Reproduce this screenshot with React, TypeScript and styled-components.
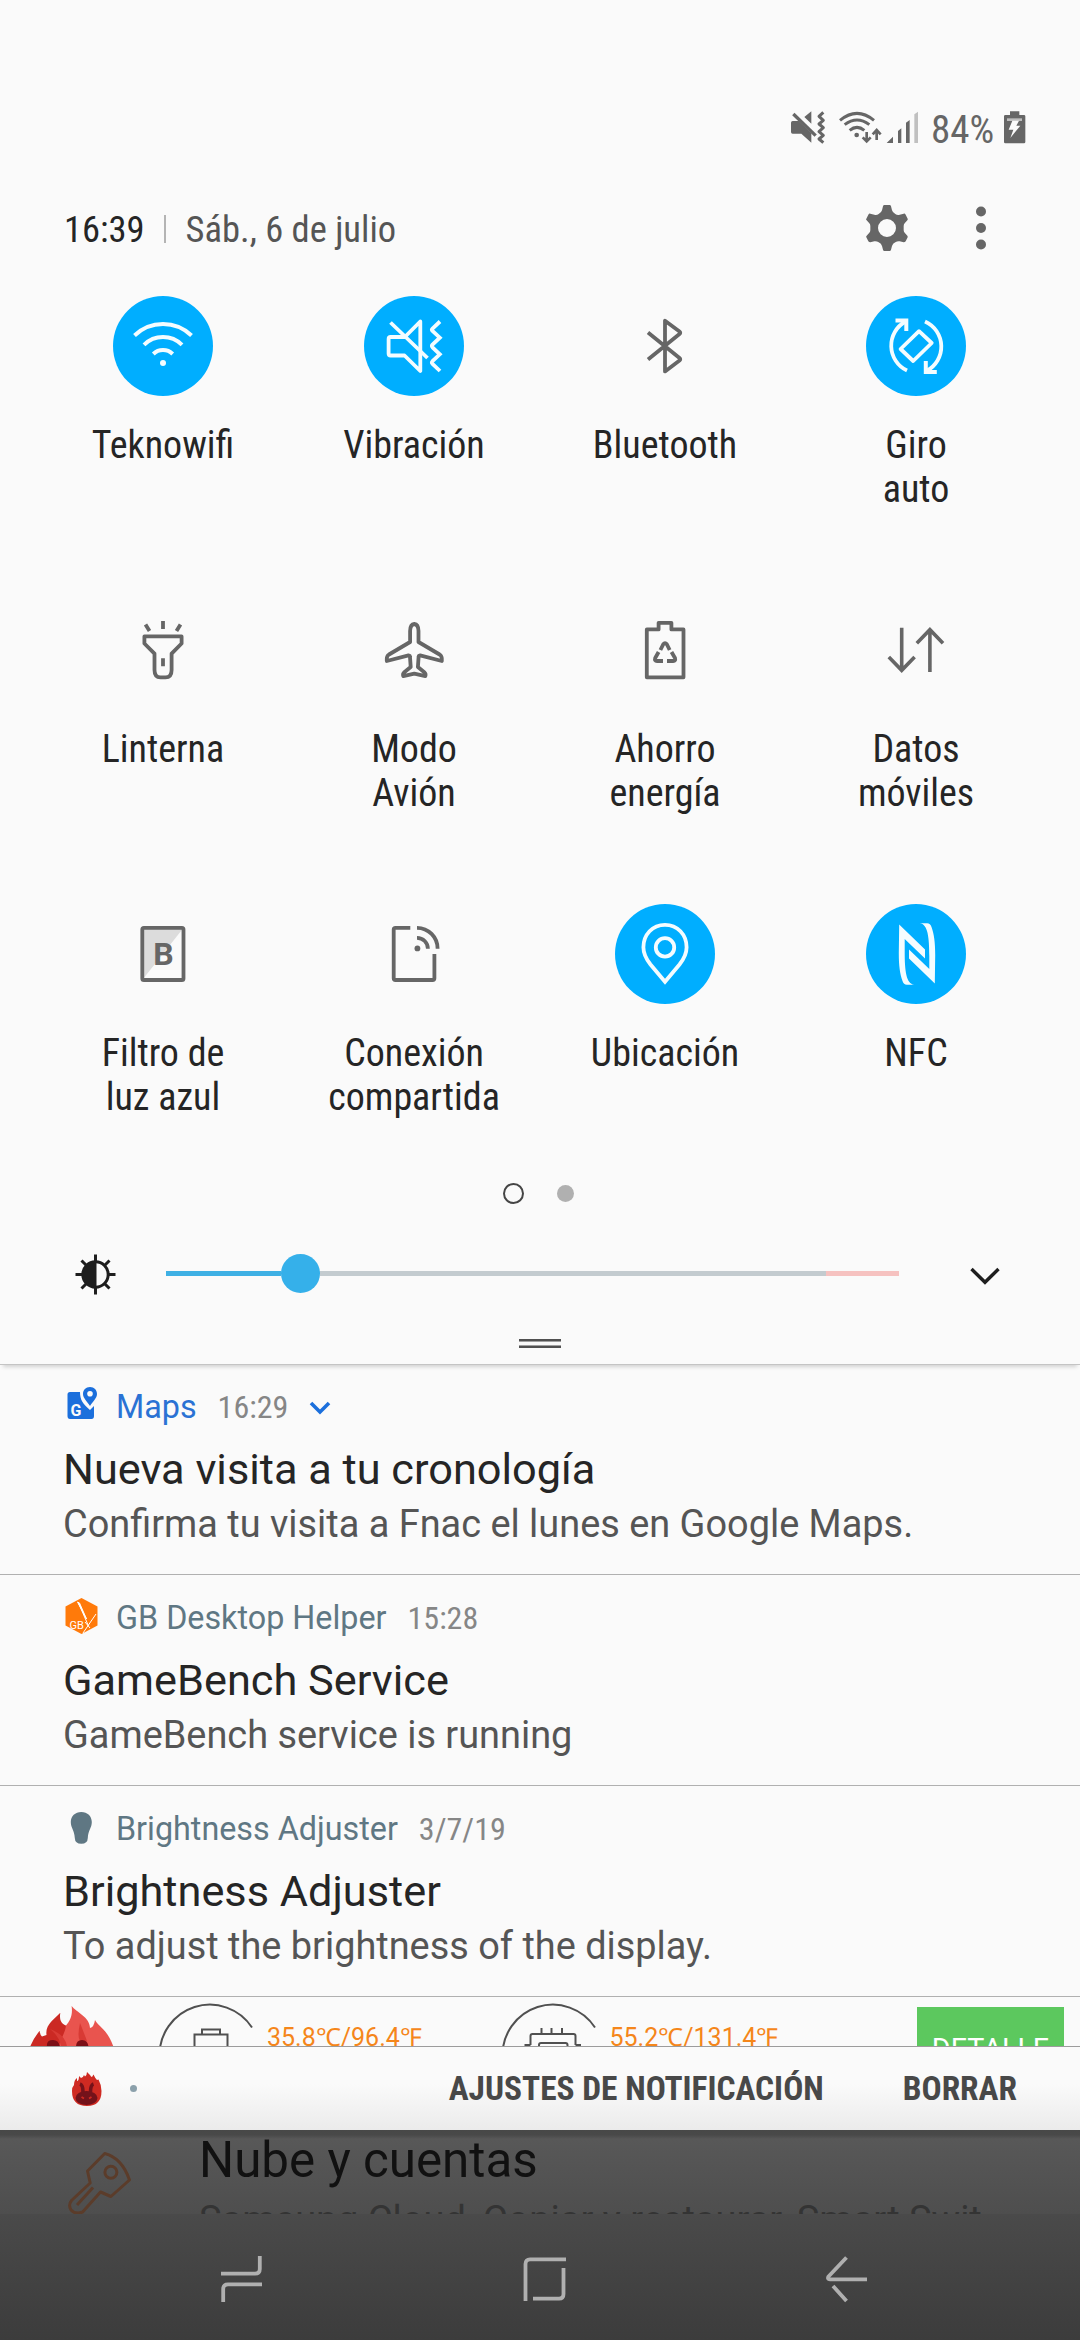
import React from "react";
import styled, { createGlobalStyle, css } from "styled-components";

const GlobalStyle = createGlobalStyle`
  html, body { margin: 0; padding: 0; background: #fafafa; }
  *, *::before, *::after { box-sizing: border-box; }
  svg { display: block; flex: none; overflow: visible; }
`;

const condensed = css`
  font-family: "Roboto Condensed", "Roboto", "Liberation Sans", sans-serif;
  font-stretch: 75%;
`;

const Screen = styled.main`
  width: 1080px;
  height: 2340px;
  display: flex;
  flex-direction: column;
  overflow: hidden;
  background: #fafafa;
  color: #252525;
  font-family: "Roboto", "Liberation Sans", sans-serif;
  white-space: nowrap;
`;

/* Quick panel */

const StatusBar = styled.header`
  height: 144px;
  padding: 110px 54px 0 0;
  display: flex;
  justify-content: flex-end;
`;

const StatusIcon = styled.svg<{ $gap: number }>`
  height: 34px;
  margin-right: ${(p) => p.$gap}px;
  color: #666;
`;

const BatteryLevel = styled.span`
  ${condensed}
  font-size: 39px;
  line-height: 40px;
  width: 72px;
  color: #666;
`;

const DateBar = styled.div`
  height: 152px;
  padding: 60px 93px 44px 64px;
  display: flex;
  align-items: center;
`;

const Clock = styled.span`
  ${condensed}
  font-size: 36.5px;
  line-height: 48px;
  padding-top: 3px;
`;

const DateText = styled(Clock)`
  color: #555;
  flex: 1;
`;

const Separator = styled.i`
  width: 2px;
  height: 28px;
  margin: 2px 20px 0 19px;
  background: #b4b4b4;
`;

const Tiles = styled.section`
  display: grid;
  grid-template-columns: repeat(4, 251px);
  grid-template-rows: 304px 304px 220px;
  padding: 0 37.5px;
`;

const Tile = styled.div`
  display: flex;
  flex-direction: column;
  align-items: center;
`;

const TileDisc = styled.div<{ $on?: boolean }>`
  width: 100px;
  height: 100px;
  border-radius: 50%;
  background: ${(p) => (p.$on ? "#00aeff" : "transparent")};
  color: ${(p) => (p.$on ? "#f4fcff" : "#666")};
`;

const TileLabel = styled.span`
  ${condensed}
  margin-top: 27px;
  font-size: 38px;
  line-height: 44px;
  text-align: center;
  white-space: pre-line;
`;

const Pager = styled.div`
  margin-top: 59px;
  height: 21px;
  padding-right: 4px;
  display: flex;
  justify-content: center;
  align-items: center;
  gap: 33px;
`;

const PageDot = styled.i<{ $current?: boolean }>`
  width: ${(p) => (p.$current ? 21 : 17)}px;
  height: ${(p) => (p.$current ? 21 : 17)}px;
  border-radius: 50%;
  border: ${(p) => (p.$current ? "2px solid #454545" : "none")};
  background: ${(p) => (p.$current ? "transparent" : "#b0b0b0")};
`;

const BrightnessRow = styled.div`
  margin-top: 49px;
  height: 41px;
  padding: 0 80px 0 75px;
  display: flex;
  align-items: center;
`;

const Track = styled.div`
  width: 733px;
  height: 39px;
  margin: 0 71px 0 50px;
  display: flex;
  align-items: center;
`;

const TrackPart = styled.i<{ $width: number; $color: string }>`
  width: ${(p) => p.$width}px;
  height: 5px;
  background: ${(p) => p.$color};
`;

const Thumb = styled.i`
  width: 39px;
  height: 39px;
  border-radius: 50%;
  background: #35b0ea;
`;

const HandleArea = styled.div`
  height: 71px;
  padding-top: 45px;
  display: flex;
  flex-direction: column;
  align-items: center;
  gap: 3px;
  border-bottom: 1px solid #c4c4c4;
  box-shadow: 0 5px 4px -3px rgba(0, 0, 0, 0.16);
`;

const HandleLine = styled.i`
  width: 42px;
  height: 3px;
  background: linear-gradient(#505050 66%, #a0a0a0 66%);
  &:last-child { transform: scaleY(-1); }
`;

/* Notifications */

const Notification = styled.article<{ $first?: boolean }>`
  height: ${(p) => (p.$first ? 210 : 211)}px;
  padding: ${(p) => (p.$first ? 22 : 23)}px 63px 0;
  border-bottom: 1px solid #b0b0b0;
`;

const NotificationHead = styled.div<{ $tint: string }>`
  display: flex;
  align-items: center;
  height: 40px;
  color: ${(p) => p.$tint};
  font-size: 32.3px;
  line-height: 40px;
`;

const IconSlot = styled.span`
  width: 53px;
  display: flex;
`;

const When = styled.span`
  ${condensed}
  margin: 0 21px;
  font-size: 32px;
  color: #868686;
`;

const Title = styled.h2`
  margin: 14.5px 0 2.5px;
  font-size: 43.3px;
  font-weight: 400;
  line-height: 56px;
`;

const Body = styled.p`
  margin: 0;
  font-size: 37.9px;
  line-height: 48px;
  color: #555;
`;

const MonitorStrip = styled.article`
  height: 50px;
  padding-left: 30px;
  display: flex;
  align-items: flex-start;
  overflow: hidden;
  border-bottom: 1px solid #9c9c9c;
`;

const GaugeGroup = styled.div`
  display: flex;
  margin-left: 36px;
`;

const Gauge = styled.svg`
  margin-right: -3px;
`;

const Temperature = styled.span<{ $width: number }>`
  width: ${(p) => p.$width}px;
  padding-top: 25px;
  font-size: 25px;
  line-height: 32px;
  color: #f5861a;
`;

const DetailButton = styled.span`
  width: 147px;
  margin-top: 10px;
  padding-top: 24px;
  font-size: 28.7px;
  line-height: 36px;
  text-align: center;
  color: #fff;
  background: #5cc85e;
`;

const Footer = styled.footer`
  height: 83px;
  padding: 0 63px 0 71px;
  display: flex;
  align-items: center;
  background: linear-gradient(#fafafa 45%, #ebebeb);
`;

const OverflowDot = styled.i`
  width: 7px;
  height: 7px;
  margin: 0 auto 0 28px;
  border-radius: 50%;
  background: #8ba0ab;
`;

const FooterAction = styled.span`
  ${condensed}
  font-size: 33.4px;
  font-weight: 700;
  line-height: 40px;
  margin-left: 79px;
  color: #484848;
`;

/* Dimmed page below the shade */

const Backdrop = styled.section`
  height: 84px;
  padding-left: 60px;
  display: flex;
  overflow: hidden;
  background: linear-gradient(#474847 0, #494949 5px, #585858 9px, #4e4e4e 84px);
`;

const BackdropText = styled.div`
  margin-left: 59px;
`;

const BackdropTitle = styled.div`
  height: 68px;
  padding-top: 1px;
  font-size: 49.3px;
  line-height: 58px;
  color: #111;
`;

const BackdropSummary = styled.div`
  font-size: 38px;
  line-height: 44px;
  color: #343434;
`;

const NavBar = styled.nav`
  height: 126px;
  padding: 42px 213px 0 221px;
  display: flex;
  justify-content: space-between;
  background: linear-gradient(#4a4a4a, #3c3c3c);
  color: #b0b0b0;
`;

type LineIconProps = { children: React.ReactNode; w?: number };

const LineIcon = ({ children, w = 3.8 }: LineIconProps) => (
  <svg width="100" height="100" viewBox="0 0 100 100" fill="none" stroke="currentColor" strokeWidth={w}>
    {children}
  </svg>
);

const nfcHalf =
  "M33.2 20.5 L59 45.5 V54.5 L38.7 35 V48 C38.7 66 40 80 48.3 80.7 H41 C38.5 80.7 37.5 79.5 36.5 77 C34 70 32.8 62 32.8 49 Z";

const tiles: { label: string; on?: boolean; icon: React.ReactNode }[] = [
  {
    label: "Teknowifi",
    on: true,
    icon: (
      <LineIcon w={4}>
        <path d="M21.5 39.5 A41 41 0 0 1 78.5 39.5 M31 48.8 A27 27 0 0 1 69 48.8 M40.3 58 A14 14 0 0 1 59.7 58" />
        <circle cx="50" cy="67" r="3" fill="currentColor" stroke="none" />
      </LineIcon>
    ),
  },
  {
    label: "Vibración",
    on: true,
    icon: (
      <LineIcon>
        <path
          strokeLinejoin="round"
          d="M56.3 25.5 L40.8 41 H26.6 Q24.6 41 24.6 43 V57.5 Q24.6 59.5 26.6 59.5 H40.5 L56.3 75 Z"
        />
        <path d="M26.5 26.5 L63.5 62 M76 25.5 L68.5 32.5 Q67.3 33.7 68.5 35 L75.8 41.7 L68.5 48.6 Q67.3 50 68.5 51.3 L75.8 58.3 L68.5 65.2 Q67.3 66.5 68.5 67.8 L76 75" />
      </LineIcon>
    ),
  },
  {
    label: "Bluetooth",
    icon: (
      <LineIcon>
        <path
          strokeLinejoin="round"
          d="M33 63.5 L64.5 38 Q66 36.7 64.5 35.5 L50 24.7 V75.4 L64.5 64.6 Q66 63.3 64.5 62 L33 36.5"
        />
      </LineIcon>
    ),
  },
  {
    label: "Giro\nauto",
    on: true,
    icon: (
      <LineIcon>
        <path d="M41 74.5 A27.5 27.5 0 0 1 39.5 25.5 M59 25.5 A27.5 27.5 0 0 1 60.5 75" />
        <path strokeWidth="4" d="M29.5 24.5 H40.3 V35 M59.8 65 V76 H70.8" />
        <path strokeLinejoin="round" d="M53 35.2 L65.7 47 L47.2 65 L34.6 53 Z" />
      </LineIcon>
    ),
  },
  {
    label: "Linterna",
    icon: (
      <LineIcon>
        <path d="M50 21 V29 M32.5 24.5 L36.5 31 M67.5 24.5 L63.5 31 M50 58.3 V66.3" />
        <path
          strokeLinejoin="round"
          d="M31.4 36.4 H68.6 V43.5 L58.6 53.7 V70 Q58.6 77.4 52.5 77.4 H47.5 Q41.5 77.4 41.5 70 V53.7 L31.4 43.5 Z"
        />
      </LineIcon>
    ),
  },
  {
    label: "Modo\nAvión",
    icon: (
      <LineIcon>
        <path
          strokeLinejoin="round"
          d="M50.3 24 Q46.2 24.5 46.1 31 V42 L25 54.5 Q22.8 56 22.8 58.5 V61 L44.5 55.3 Q46 55.5 46 57 L46.7 67 L40 72.5 Q38.5 74 39.3 76.2 L50.3 73.7 L61.3 76.2 Q62.1 74 60.6 72.5 L53.9 67 L54.6 57 Q54.6 55.5 56.1 55.3 L77.8 61 V58.5 Q77.8 56 75.6 54.5 L54.5 42 V31 Q54.4 24.5 50.3 24 Z"
        />
      </LineIcon>
    ),
  },
  {
    label: "Ahorro\nenergía",
    icon: (
      <LineIcon>
        <path
          strokeLinejoin="round"
          d="M31.8 29.4 H43.6 V22.8 H56.4 V29.4 H68.5 V77.3 H31.8 Z"
        />
        <path d="M45.4 50 L48.3 44.2 Q50 42 51.8 44.2 L54.7 50 M43.6 52 L40.2 58 Q39.3 61 42 61 H48 M56.5 52 L60 58 Q60.8 61 58.2 61 H52" />
      </LineIcon>
    ),
  },
  {
    label: "Datos\nmóviles",
    icon: (
      <LineIcon w={3.6}>
        <path d="M35.7 27.7 V70.5 M22.8 57 L35.7 70.3 L48.6 57 M63.9 72 V29.5 M50.8 43.2 L63.9 29.7 L77 43.2" />
      </LineIcon>
    ),
  },
  {
    label: "Filtro de\nluz azul",
    icon: (
      <LineIcon>
        <path d="M30 75 V24.5 H70 Z" fill="#dcdcdc" stroke="none" />
        <rect x="29.3" y="23.8" width="41.2" height="52.2" rx="1.6" />
        <text
          x="50.5"
          y="61.3"
          fontSize="32"
          fontWeight="700"
          fontFamily="Roboto, sans-serif"
          textAnchor="middle"
          fill="currentColor"
          stroke="none"
        >
          B
        </text>
      </LineIcon>
    ),
  },
  {
    label: "Conexión\ncompartida",
    icon: (
      <LineIcon>
        <path d="M46.3 23.8 H31.5 Q29.7 23.8 29.7 25.6 V74.2 Q29.7 76 31.5 76 H68.6 Q70.4 76 70.4 74.2 V50" />
        <path d="M53 23.8 A20.6 20.8 0 0 1 73.6 44.7 M53 33.8 A10.9 10.9 0 0 1 63.9 44.7" />
        <circle cx="53.4" cy="44.4" r="2.9" fill="currentColor" stroke="none" />
      </LineIcon>
    ),
  },
  {
    label: "Ubicación",
    on: true,
    icon: (
      <LineIcon>
        <path d="M50 20.8 C37.6 20.8 28.4 30.5 28.4 43.3 C28.4 50 31.5 55.5 35.5 60.5 L50 77.8 L64.5 60.5 C68.5 55.5 71.6 50 71.6 43.3 C71.6 30.5 62.4 20.8 50 20.8 Z" />
        <circle cx="50" cy="43.4" r="9.2" />
      </LineIcon>
    ),
  },
  {
    label: "NFC",
    on: true,
    icon: (
      <LineIcon>
        <g fill="currentColor" stroke="none">
          <path d={nfcHalf} />
          <path d={nfcHalf} transform="rotate(180 51 50)" />
        </g>
      </LineIcon>
    ),
  },
];

const MutedIcon = () => (
  <StatusIcon $gap={12} width="36" viewBox="150 60 108 102">
    <path
      d="M153 98 Q153 93 158 93 H176 L214 130 V158 L184 131 H158 Q153 131 153 126 Z M193 81 L214 64 V101 Z"
      fill="currentColor"
    />
    <path d="M160 72 L227 137" stroke="currentColor" strokeWidth="10" />
    <path
      d="M250 67 L237 79 L250 91 L237 102 L250 113 L237 125 L250 136 L237 147 L250 158"
      fill="none"
      stroke="currentColor"
      strokeWidth="9"
      strokeLinejoin="round"
    />
  </StatusIcon>
);

const WifiIcon = () => (
  <StatusIcon $gap={4} width="44" viewBox="294 60 132 102">
    <g fill="none" stroke="currentColor" strokeWidth="9">
      <path d="M300 91 Q351 49 402 91 M314 104 Q351 76 388 104 M329 121 Q351 103 373 121" />
      <path strokeWidth="8" d="M380 126 V154 M368 142 L380 154 L392 142 M410 150 V121 M398 133 L410 120 L422 133" />
    </g>
    <circle cx="350" cy="135" r="7" fill="currentColor" />
  </StatusIcon>
);

const SignalIcon = () => (
  <StatusIcon $gap={12} width="33" viewBox="438 60 99 102">
    <path fill="currentColor" d="M440 159 L459 140 V159 Z M474 159 V123 L484 115 V159 Z M498 159 V98 L509 90 V159 Z" />
    <path fill="#c0c0c0" d="M523 159 V73 L534 65 V159 Z" />
  </StatusIcon>
);

const ChargingIcon = () => (
  <StatusIcon $gap={0} width="23" viewBox="789 60 69 102">
    <path
      fill="currentColor"
      d="M810 64 H838 V75 H852 Q856 75 856 79 V156 Q856 160 852 160 H796 Q792 160 792 156 V79 Q792 75 796 75 H810 Z"
    />
    <path fill="#bdbdbd" d="M801 85 H846 V93 H801 Z" />
    <path fill="#fafafa" d="M817 92 H837 L829 107 H841 L811 144 L820 119 H806 Z" />
  </StatusIcon>
);

const GearIcon = () => (
  <svg width="44" height="48" viewBox="375 342 132 144" fill="#666">
    <path
      fillRule="evenodd"
      d="M433 345 H449 Q452 345 453 349 L456 361 Q458 368 466 372 Q472 376 479 374 L491 371 Q495 370 497 374 L503 386 Q504 389 502 391 L494 400 Q491 403 491 408 V420 Q491 425 494 428 L502 437 Q504 440 503 442 L497 454 Q495 457 491 457 L479 454 Q472 453 466 457 Q458 461 456 468 L453 479 Q452 483 449 483 H433 Q430 483 429 479 L426 468 Q424 461 416 457 Q410 453 403 454 L391 457 Q387 457 385 454 L379 442 Q377 440 380 437 L388 428 Q391 425 391 420 V408 Q391 403 388 400 L380 391 Q377 389 379 386 L385 374 Q387 370 391 371 L403 374 Q410 376 416 372 Q424 368 426 361 L429 349 Q430 345 433 345 Z M441 387 A27 27 0 1 0 441 441 A27 27 0 1 0 441 387 Z"
    />
  </svg>
);

const MoreIcon = styled.svg`
  margin-left: 66px;
`;

const BrightnessIcon = () => (
  <svg width="41" height="41" viewBox="0 0 41 41" fill="none" stroke="#1e1e1e" strokeWidth="3">
    <circle cx="20.5" cy="21.5" r="12.7" />
    <path d="M21.5 8 A13.5 13.5 0 0 0 21.5 35 Z" fill="#1e1e1e" stroke="none" />
    <path d="M20.5 1.5 V9 M20.5 34 V41.5 M0.5 21.5 H8 M33 21.5 H40.5 M6.5 7.5 L11.5 12.5 M34.5 7.5 L29.5 12.5 M6.5 35.5 L11.5 30.5 M34.5 35.5 L29.5 30.5" />
  </svg>
);

const MapsIcon = () => (
  <svg width="36" height="36" viewBox="0 5 36 36">
    <path
      fill="#1b6fdc"
      d="M7 8 H17 C17 16 20 20 27 26 L31 22 V32 Q31 35 28.5 35 H7 Q4.5 35 4.5 32 V10.5 Q4.5 8 7 8 Z"
    />
    <path fill="#1b6fdc" d="M27 3 C31.2 3 34 6 34 10 C34 14 30 17.5 27 22 C24 17.5 20 14 20 10 C20 6 22.8 3 27 3 Z" />
    <circle cx="27" cy="9.8" r="2.8" fill="#fafafa" />
    <text x="7.5" y="31.5" fontSize="16" fontWeight="700" fontFamily="Roboto, sans-serif" fill="#fafafa">
      G
    </text>
  </svg>
);

const GameBenchIcon = () => (
  <svg width="36" height="36" viewBox="0 2 36 36">
    <path fill="#ff7a0a" d="M18.5 0 L34.5 8.5 V27.5 L18.5 36 L2.5 27.5 V8.5 Z" />
    <path d="M15.5 5 L25.5 28 M33 16 L20 35 M22 24 L27 30" stroke="#fff" strokeWidth="1" fill="none" />
    <path d="M14.5 4 L23.5 21 L16.5 5 Z" stroke="#fff" strokeWidth="1" fill="#fff" />
    <text x="6.5" y="31" fontSize="11" fontFamily="Roboto, sans-serif" fill="#fff">
      GB
    </text>
  </svg>
);

const BulbIcon = () => (
  <svg width="36" height="36" viewBox="0 1 36 36">
    <path
      fill="#5f7783"
      d="M18.3 2 C24.5 2 28.8 6.3 28.8 12 C28.8 18 25.2 20 24.8 28 Q24.6 33.8 18.3 33.8 Q12 33.8 11.8 28 C11.4 20 7.8 18 7.8 12 C7.8 6.3 12.1 2 18.3 2 Z"
    />
  </svg>
);

const FlameLogo = () => (
  <svg width="84" height="60" viewBox="0 0 84 60">
    <path
      fill="#cb2923"
      d="M0 50 Q3 42 9.6 33.7 Q10 38 12 39.5 L16.5 38 C15 28 24 22 30.3 15.7 C29 24 32 27 36 28.5 L50 60 H0 Z"
    />
    <path
      fill="#e9544e"
      d="M29 50 C30 42 35 37 36 28.5 C40 24 43 18 41.6 9 C46 15 60 20 60 31 Q64 30 65 23 C68 29 78 33 83.5 50 Z"
    />
    <path fill="#d83a34" d="M20 32 Q30 40 31 50 H37 Q36 38 20 32 Z M50 26 Q47 40 50 44 H57 Q54 36 50 26 Z" />
    <path fill="#7c0f16" d="M17 50 Q16 43 23 43 Q29 43 30 50 Z M46 50 Q46 43 52 43 Q58 43 58.5 50 Z" />
  </svg>
);

const FlameBadge = () => (
  <svg width="31" height="34" viewBox="0 0 31 34">
    <path
      fill="#cf2a22"
      d="M3 13 Q3 8 6 6 V9 Q8 9 8 4 L10 6 Q12 6 13 3 L14 4.5 Q16 3 16 0 L19 3 Q20 5 21 5 L22.5 2.5 Q24 6 26 8 L27.5 7.5 Q30.5 13 30.5 19 Q30.5 34 16 34 Q1 34 1 19 Q1 15 3 13 Z"
    />
    <ellipse cx="15.5" cy="26" rx="11" ry="7" fill="#74121a" />
    <path d="M9 12 Q12 13 12 20 M22.5 12 Q19.5 13 19.5 20" stroke="#74121a" strokeWidth="3.6" fill="none" />
    <path d="M10.5 25 L13 26.5 M20.5 25 L18 26.5" stroke="#cf2a22" strokeWidth="1.8" />
  </svg>
);

const gaugeProps = {
  width: 120,
  height: 60,
  viewBox: "0 0 120 60",
  fill: "none",
  stroke: "#505050",
  strokeWidth: 2,
};

const gaugeArc = "M9.6 60 A50.3 50.3 0 0 1 102 30.5";

const App = () => (
  <>
    <GlobalStyle />
    <Screen>
      <StatusBar>
        <MutedIcon />
        <WifiIcon />
        <SignalIcon />
        <BatteryLevel>84%</BatteryLevel>
        <ChargingIcon />
      </StatusBar>
      <DateBar>
        <Clock>16:39</Clock>
        <Separator />
        <DateText>Sáb., 6 de julio</DateText>
        <GearIcon />
        <MoreIcon width="12" height="46" viewBox="0 0 12 46" fill="#666">
          <circle cx="6" cy="6.5" r="5" />
          <circle cx="6" cy="23" r="5" />
          <circle cx="6" cy="39.5" r="5" />
        </MoreIcon>
      </DateBar>
      <Tiles>
        {tiles.map((t) => (
          <Tile key={t.label}>
            <TileDisc $on={t.on}>{t.icon}</TileDisc>
            <TileLabel>{t.label}</TileLabel>
          </Tile>
        ))}
      </Tiles>
      <Pager>
        <PageDot $current />
        <PageDot />
      </Pager>
      <BrightnessRow>
        <BrightnessIcon />
        <Track>
          <TrackPart $width={115} $color="#3fb0e4" />
          <Thumb />
          <TrackPart $width={506} $color="#c3cbcf" />
          <TrackPart $width={73} $color="#f6c2c0" />
        </Track>
        <svg width="30" height="20" viewBox="0 0 30 20" fill="none" stroke="#1e1e1e" strokeWidth="3.4">
          <path d="M1.5 5 L15 18.3 L28.5 5" />
        </svg>
      </BrightnessRow>
      <HandleArea>
        <HandleLine />
        <HandleLine />
      </HandleArea>

      <Notification $first>
        <NotificationHead $tint="#2a72d4">
          <IconSlot>
            <MapsIcon />
          </IconSlot>
          Maps
          <When>16:29</When>
          <svg width="22" height="14" viewBox="0 0 22 14" fill="none" stroke="#1b6fdc" strokeWidth="3.6">
            <path d="M2 3 L11 12 L20 3" />
          </svg>
        </NotificationHead>
        <Title>Nueva visita a tu cronología</Title>
        <Body>Confirma tu visita a Fnac el lunes en Google Maps.</Body>
      </Notification>
      <Notification>
        <NotificationHead $tint="#5f7783">
          <IconSlot>
            <GameBenchIcon />
          </IconSlot>
          GB Desktop Helper
          <When>15:28</When>
        </NotificationHead>
        <Title>GameBench Service</Title>
        <Body>GameBench service is running</Body>
      </Notification>
      <Notification>
        <NotificationHead $tint="#5f7783">
          <IconSlot>
            <BulbIcon />
          </IconSlot>
          Brightness Adjuster
          <When>3/7/19</When>
        </NotificationHead>
        <Title>Brightness Adjuster</Title>
        <Body>To adjust the brightness of the display.</Body>
      </Notification>

      <MonitorStrip>
        <FlameLogo />
        <GaugeGroup>
          <Gauge {...gaugeProps}>
            <path d={gaugeArc} />
            <path d="M44.5 60 V37.5 H77.5 V60 M52 37.5 V32.5 H70 V37.5" />
          </Gauge>
          <Temperature $width={225.5}>35.8℃/96.4℉</Temperature>
          <Gauge {...gaugeProps}>
            <path d={gaugeArc} />
            <path d="M37.5 48 V39 Q37.5 37 39.5 37 H80.5 Q82.5 37 82.5 39 V48 M48.5 31 V37 M58.5 31 V37 M69 31 V37 M31.5 48 H37.5 M82.5 48 H88 M46 60 V48 Q46 46 48 46 H72.5 Q74.5 46 74.5 48 V60" />
          </Gauge>
          <Temperature $width={307.5}>55.2℃/131.4℉</Temperature>
        </GaugeGroup>
        <DetailButton>DETALLE</DetailButton>
      </MonitorStrip>
      <Footer>
        <FlameBadge />
        <OverflowDot />
        <FooterAction>AJUSTES DE NOTIFICACIÓN</FooterAction>
        <FooterAction>BORRAR</FooterAction>
      </Footer>

      <Backdrop>
        <svg width="80" height="84" viewBox="0 0 80 84" fill="none" stroke="#5b3c2a" strokeWidth="3">
          <path
            strokeLinejoin="round"
            d="M44.7 23.5 Q62 28 69.5 50 L50.9 66.5 L40.5 62 L22.6 82 Q15.5 85 11 80 Q8 75 11.5 70.5 L30.2 53 L27.5 41 Z"
          />
          <circle cx="50.9" cy="42.3" r="6" />
          <path d="M33 57.5 L17 75" />
        </svg>
        <BackdropText>
          <BackdropTitle>Nube y cuentas</BackdropTitle>
          <BackdropSummary>Samsung Cloud, Copiar y restaurar, Smart Swit…</BackdropSummary>
        </BackdropText>
      </Backdrop>
      <NavBar>
        <svg width="42" height="46" viewBox="0 0 42 46" fill="none" stroke="currentColor" strokeWidth="3.8">
          <path d="M38.8 0 V13 Q38.8 17.7 34 17.7 H0 M2.2 46 V33 Q2.2 28.3 7 28.3 H41" />
        </svg>
        <svg width="44" height="46" viewBox="0 0 44 46" fill="none" stroke="currentColor" strokeWidth="3.8">
          <path d="M43 3.4 H7 Q2.5 3.4 2.5 8 V45 M40.5 12 V38 Q40.5 42.7 36 42.7 H10" />
        </svg>
        <svg width="41" height="46" viewBox="0 0 41 46" fill="none" stroke="currentColor" strokeWidth="3.8">
          <path strokeLinejoin="round" d="M20.5 1.5 L2.5 20.5 Q1 23.3 4 23.3 H41 M7 30 L20.5 45" />
        </svg>
      </NavBar>
    </Screen>
  </>
);

export default App;
